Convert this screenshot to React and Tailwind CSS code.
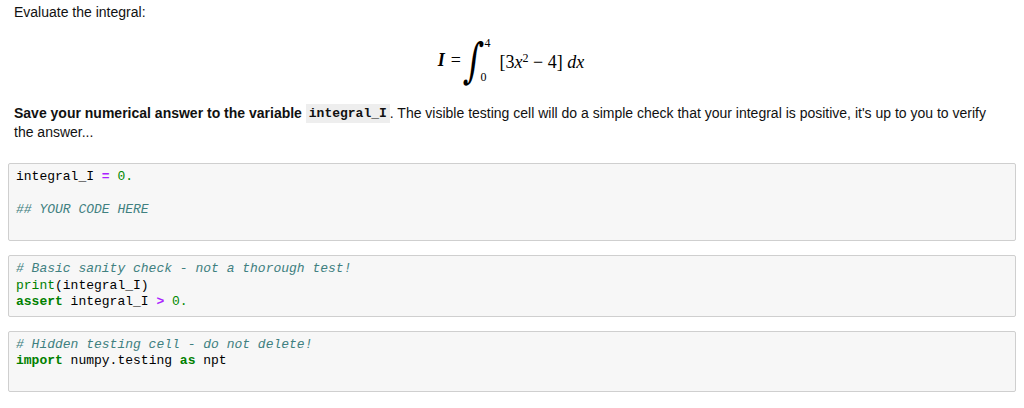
import React from 'react';

const Kw = ({ children }) => <span className="text-[#008000] font-bold">{children}</span>;
const Op = ({ children }) => <span className="text-[#AA22FF] font-bold">{children}</span>;
const Num = ({ children }) => <span className="text-[#008800]">{children}</span>;
const Cm = ({ children }) => <span className="text-[#408080] italic">{children}</span>;
const Bi = ({ children }) => <span className="text-[#008000]">{children}</span>;

const Cell = ({ children }) => (
  <div className="border border-[#cfcfcf] rounded-[2px] bg-[#f7f7f7] px-[7px] py-[5px] font-['Liberation_Mono',monospace] text-[13px] leading-[16.5px] text-black whitespace-pre">
    {children}
  </div>
);

const Integral = () => (
  <div className="flex items-center justify-center font-['Liberation_Serif',serif] text-[18px] text-black h-[56px] pr-[2px]">
    <span className="italic font-bold">I</span>
    <span className="ml-[6px]">=</span>
    <span className="ml-[4px] font-['DejaVu_Serif',serif] text-[34px] leading-none italic scale-y-[1.4] -skew-x-[8deg]">∫</span>
    <div className="flex flex-col justify-between h-[46px] text-[12px] leading-none -ml-[2px]">
      <span className="ml-[4px]">4</span>
      <span>0</span>
    </div>
    <span className="ml-[9px] mt-[4px]">
      [3<span className="italic">x</span>
      <sup className="text-[12px]">2</sup> − 4] <span className="italic">dx</span>
    </span>
  </div>
);

export default function App() {
  return (
    <div className="w-[1024px] h-[408px] bg-white overflow-hidden font-['Liberation_Sans',Arial,sans-serif] text-[14px] text-[#111]">
      <div className="px-[14px] pt-[2px]">
        <p className="leading-[20px]">Evaluate the integral:</p>
        <div className="mt-[10px]">
          <Integral />
        </div>
        <p className="mt-[16px] leading-[19px] pr-[14px]">
          <b>Save your numerical answer to the variable</b>{' '}
          <code className="inline-block align-top font-['Liberation_Mono',monospace] font-bold text-[13px] leading-[19px] bg-[#eeeeee] px-[3px]">integral_I</code>
          . The visible testing cell will do a simple check that your integral is positive, it's up to you to verify the answer...
        </p>
      </div>
      <div className="px-[8px] mt-[21px] flex flex-col gap-[14px]">
        <Cell>
          {'integral_I '}<Op>=</Op> <Num>0.</Num>
          {'\n\n'}
          <Cm>## YOUR CODE HERE</Cm>
          {'\n '}
        </Cell>
        <Cell>
          <Cm># Basic sanity check - not a thorough test!</Cm>
          {'\n'}
          <Bi>print</Bi>(integral_I)
          {'\n'}
          <Kw>assert</Kw> integral_I <Op>&gt;</Op> <Num>0.</Num>
        </Cell>
        <Cell>
          <Cm># Hidden testing cell - do not delete!</Cm>
          {'\n'}
          <Kw>import</Kw> numpy.testing <Kw>as</Kw> npt
          {'\n '}
        </Cell>
      </div>
    </div>
  );
}
